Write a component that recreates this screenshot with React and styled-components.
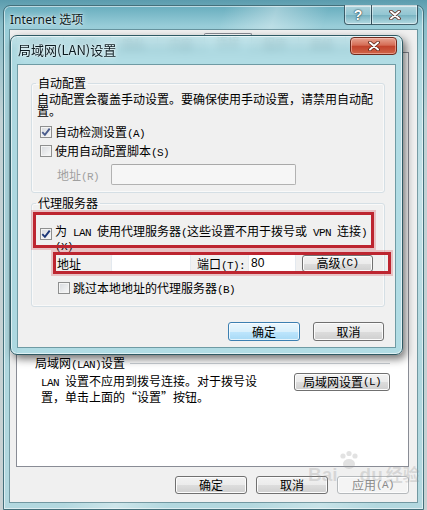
import React from "react";
import styled, { createGlobalStyle } from "styled-components";

const CJK = `"Noto Sans CJK SC", "Noto Sans", sans-serif`;

const Tick = ({ color }) => (
  <svg width="10" height="10" viewBox="0 0 10 10">
    <path d="M1.3 5.2 L3.9 7.8 L8.7 1.6" fill="none" stroke={color} strokeWidth="1.9" />
  </svg>
);

const Check = ({ checked, color = "#34508e" }) => (
  <CheckBox>{checked && <Tick color={color} />}</CheckBox>
);

const CloseGlyph = () => (
  <svg width="12" height="10" viewBox="0 0 12 10">
    <path d="M2 1.5 L10 8.5 M10 1.5 L2 8.5" stroke="#5a2418" strokeWidth="3.6" strokeLinecap="round" />
    <path d="M2 1.5 L10 8.5 M10 1.5 L2 8.5" stroke="#fff" strokeWidth="2" strokeLinecap="round" />
  </svg>
);

const TABS = ["常规", "安全", "隐私", "内容", "连接", "程序", "高级"];

const App = () => {
  return (
    <Desktop>
      <GlobalStyle />
      <OuterWindow>
        <OuterTitleBar>
          <WindowTitle>Internet 选项</WindowTitle>
          <CaptionGroup>
            <CaptionButton $w={28} $first>?</CaptionButton>
            <CaptionButton $w={47} $last>
              <CloseGlyph />
            </CaptionButton>
          </CaptionGroup>
        </OuterTitleBar>
        <OuterClient>
          <TabStrip>
            {TABS.map((t) => (
              <Tab key={t} $active={t === "连接"}>{t}</Tab>
            ))}
          </TabStrip>
          <TabPage>
            <SectionHeader>
              <span>
                局域网<Lat>(LAN)</Lat>设置
              </span>
              <Rule />
            </SectionHeader>
            <SectionBody>
              <SectionText>
                <Lat>LAN </Lat>设置不应用到拨号连接。对于拨号设
                <br />
                置，单击上面的“设置”按钮。
              </SectionText>
              <Button $w={96} $h={18}>
                局域网设置<Lat>(L)</Lat>
              </Button>
            </SectionBody>
          </TabPage>
          <ButtonRow>
            <Button $w={72} $h={18}>确定</Button>
            <Button $w={72} $h={18}>取消</Button>
            <Button $w={72} $h={18} $disabled>
              应用<Lat>(A)</Lat>
            </Button>
          </ButtonRow>
        </OuterClient>
      </OuterWindow>

      <Dialog>
        <DialogTitleBar>
          <DialogTitle>局域网(LAN)设置</DialogTitle>
          <RedClose>
            <CloseGlyph />
          </RedClose>
        </DialogTitleBar>
        <DialogClient>
          <Group>
            <Legend>自动配置</Legend>
            <GroupBody>
              <Description>
                自动配置会覆盖手动设置。要确保使用手动设置，请禁用自动配
                <br />
                置。
              </Description>
              <CheckRow $mt={7} $ml={3}>
                <Check checked color="#4a5c8c" />
                <span>
                  自动检测设置<Lat>(A)</Lat>
                </span>
              </CheckRow>
              <CheckRow $mt={3} $ml={3}>
                <Check />
                <span>
                  使用自动配置脚本<Lat>(S)</Lat>
                </span>
              </CheckRow>
              <ScriptRow>
                <FieldLabel $disabled>
                  地址<Lat>(R)</Lat>
                </FieldLabel>
                <TextBox $w={185} $h={21} disabled />
              </ScriptRow>
            </GroupBody>
          </Group>

          <Group $mt={3}>
            <Legend>代理服务器</Legend>
            <GroupBody $pl={0} $pb={10}>
              <ProxyRow>
                <Check checked color="#1d3778" />
                <ProxyText>
                  为<Lat> LAN </Lat>使用代理服务器<Lat>(</Lat>这些设置不用于拨号或<Lat> VPN </Lat>连接<Lat>)</Lat>
                  <br />
                  <Lat>(X)</Lat>
                </ProxyText>
              </ProxyRow>
              <ServerRow>
                <FieldLabel>地址</FieldLabel>
                <TextBox $w={80} $h={18} readOnly value="" />
                <PortLabel>
                  端口<Lat>(T):</Lat>
                </PortLabel>
                <TextBox $w={48} $h={18} readOnly value="80" />
                <Button $w={71} $h={17} $ml={6}>
                  高级<Lat>(C)</Lat>
                </Button>
              </ServerRow>
              <CheckRow $mt={9} $ml={26}>
                <Check />
                <span>
                  跳过本地地址的代理服务器<Lat>(B)</Lat>
                </span>
              </CheckRow>
            </GroupBody>
          </Group>

          <DialogButtons>
            <Button $w={72} $h={19} $primary>确定</Button>
            <Button $w={71} $h={19}>取消</Button>
          </DialogButtons>
        </DialogClient>
      </Dialog>

      <Watermark>
        <span>Bai</span>
        <Paw viewBox="0 0 24 22" width="26" height="22">
          <circle cx="6" cy="6" r="2.6" />
          <circle cx="12" cy="3.5" r="2.6" />
          <circle cx="18" cy="6" r="2.6" />
          <ellipse cx="12" cy="14" rx="6" ry="5" />
        </Paw>
        <span>du</span>
        <WatermarkCn>经验</WatermarkCn>
      </Watermark>
    </Desktop>
  );
};

const GlobalStyle = createGlobalStyle`
  html, body {
    margin: 0;
    padding: 0;
  }
  body {
    width: 427px;
    height: 510px;
    overflow: hidden;
    background: linear-gradient(180deg, #5b9cae 0, #89bdc9 24px, #c3d2d5 120px, #c8d1d3 100%);
    font-family: ${CJK};
    font-size: 12px;
    color: #000;
  }
`;

const Lat = styled.span`
  font-family: "Liberation Mono", "DejaVu Sans Mono", monospace;
  font-size: 11px;
  letter-spacing: -0.6px;
  line-height: 1;
`;

const Desktop = styled.div`
  position: relative;
  width: 427px;
  height: 510px;
  box-sizing: border-box;
  padding: 5px 3px 0;
  overflow: hidden;
`;

const OuterWindow = styled.div`
  width: 421px;
  height: 505px;
  box-sizing: border-box;
  display: flex;
  flex-direction: column;
  padding: 0 6px 7px;
  border: 1px solid #44707b;
  border-radius: 7px 7px 0 0;
  box-shadow: inset 0 0 0 1px rgba(255, 255, 255, 0.55);
  background:
    linear-gradient(108deg, rgba(255, 255, 255, 0) 0 38%, rgba(255, 255, 255, 0.35) 47%, rgba(255, 255, 255, 0) 56%, rgba(255, 255, 255, 0) 70%, rgba(255, 255, 255, 0.28) 82%, rgba(255, 255, 255, 0) 92%),
    linear-gradient(180deg, #68adbe 0, #98cdd8 20px, #a9d5de 60px, #b3d8df 100%);
`;

const OuterTitleBar = styled.div`
  height: 24px;
  display: flex;
  align-items: flex-start;
  flex: none;
`;

const WindowTitle = styled.div`
  margin-top: 6px;
  line-height: 16px;
  font-family: "Noto Sans", ${CJK};
  font-size: 12px;
  color: #0b1a20;
  text-shadow: 0 0 6px rgba(255, 255, 255, 0.9), 0 0 2px rgba(255, 255, 255, 0.9);
`;

const CaptionGroup = styled.div`
  display: flex;
  margin: -1px -1px 0 auto;
`;

const CaptionButton = styled.div`
  width: ${(p) => p.$w}px;
  height: 20px;
  box-sizing: border-box;
  display: flex;
  align-items: center;
  justify-content: center;
  border: 1px solid rgba(35, 65, 78, 0.8);
  border-top: none;
  margin-left: ${(p) => (p.$first ? 0 : -1)}px;
  border-radius: ${(p) => (p.$first ? "0 0 0 4px" : p.$last ? "0 0 4px 0" : "0")};
  background: linear-gradient(180deg, rgba(255, 255, 255, 0.5), rgba(255, 255, 255, 0.18) 50%, rgba(30, 80, 95, 0.1) 51%, rgba(255, 255, 255, 0.3));
  box-shadow: inset 0 0 0 1px rgba(255, 255, 255, 0.45);
  font-family: "Liberation Sans", sans-serif;
  font-weight: bold;
  font-size: 14px;
  color: #fff;
  text-shadow: 0 0 2px #1d3a44, 0 0 1px #1d3a44;
`;

const OuterClient = styled.div`
  flex: 1;
  display: flex;
  flex-direction: column;
  background: #f0f0f0;
  box-shadow: 0 0 0 1px rgba(70, 110, 120, 0.6);
`;

const TabStrip = styled.div`
  height: 22px;
  box-sizing: border-box;
  padding: 5px 0 0 6px;
  display: flex;
  align-items: flex-end;
`;

const Tab = styled.div`
  height: ${(p) => (p.$active ? 19 : 17)}px;
  box-sizing: border-box;
  padding: 0 11px;
  margin-right: -1px;
  line-height: 16px;
  border: 1px solid #898c95;
  border-bottom: none;
  border-radius: 2px 2px 0 0;
  color: #333;
  background: ${(p) => (p.$active ? "#fff" : "linear-gradient(#f2f2f2, #e3e3e3)")};
`;

const TabPage = styled.div`
  height: 415px;
  box-sizing: border-box;
  margin: 0 8px 0 6px;
  padding: 302px 18px 0;
  border: 1px solid #898c95;
  background: #fff;
`;

const SectionHeader = styled.div`
  height: 16px;
  display: flex;
  align-items: center;
  line-height: 16px;
`;

const Rule = styled.div`
  flex: 1;
  height: 1px;
  margin-left: 5px;
  background: #c9cfd4;
`;

const SectionBody = styled.div`
  display: flex;
  justify-content: space-between;
  align-items: flex-start;
  margin-top: 2px;
`;

const SectionText = styled.div`
  padding-left: 6px;
  line-height: 16px;
`;

const ButtonRow = styled.div`
  display: flex;
  justify-content: flex-end;
  gap: 9px;
  margin: 9px 8px 0 0;
`;

const Button = styled.button`
  width: ${(p) => p.$w}px;
  height: ${(p) => p.$h}px;
  margin-left: ${(p) => p.$ml || 0}px;
  flex: none;
  box-sizing: border-box;
  padding: 0;
  display: flex;
  align-items: center;
  justify-content: center;
  font-family: ${CJK};
  font-size: 12px;
  line-height: 14px;
  border-radius: 3px;
  color: ${(p) => (p.$disabled ? "#8a8a8a" : "#000")};
  border: 1px solid ${(p) => (p.$primary ? "#3c7fb1" : p.$disabled ? "#b5b9bc" : "#707070")};
  background: ${(p) =>
    p.$primary
      ? "linear-gradient(180deg, #eaf6fd 0%, #d9f0fc 50%, #bee6fd 51%, #a7d9f5 100%)"
      : p.$disabled
      ? "#f4f4f4"
      : "linear-gradient(180deg, #f2f2f2 0%, #ebebeb 50%, #dddddd 51%, #cfcfcf 100%)"};
  box-shadow: inset 0 0 0 1px ${(p) => (p.$primary ? "rgba(255,255,255,0.7)" : "#fcfcfc")};
`;

const Dialog = styled.div`
  position: absolute;
  z-index: 10;
  left: 10px;
  top: 35px;
  width: 393px;
  height: 320px;
  box-sizing: border-box;
  display: flex;
  flex-direction: column;
  padding: 0 6px 6px;
  border: 1px solid #2f5a64;
  border-radius: 7px;
  background:
    linear-gradient(180deg, rgba(255, 255, 255, 0.25) 0, rgba(255, 255, 255, 0) 14px),
    rgba(160, 212, 222, 0.82);
  backdrop-filter: blur(4px);
  box-shadow: inset 0 0 0 1px rgba(255, 255, 255, 0.6), 3px 4px 8px rgba(0, 0, 0, 0.55);
`;

const DialogTitleBar = styled.div`
  height: 28px;
  flex: none;
  display: flex;
  align-items: flex-start;
`;

const DialogTitle = styled.div`
  margin: 6px 0 0 1px;
  line-height: 16px;
  font-size: 13px;
  color: #0b1a20;
  text-shadow: 0 0 6px rgba(255, 255, 255, 0.9), 0 0 2px rgba(255, 255, 255, 0.9);
`;

const RedClose = styled.div`
  width: 47px;
  height: 18px;
  box-sizing: border-box;
  margin: 1px -1px 0 auto;
  display: flex;
  align-items: center;
  justify-content: center;
  border: 1px solid #6e2a1d;
  border-radius: 4px;
  background: linear-gradient(180deg, #e8a593 0%, #d56c55 45%, #c2432c 52%, #d06448 100%);
  box-shadow: inset 0 0 0 1px rgba(255, 210, 200, 0.5);
`;

const DialogClient = styled.div`
  flex: 1;
  display: flex;
  flex-direction: column;
  padding: 11px 10px 0 13px;
  background: #f0f0f0;
  border: 1px solid #6f9ba4;
`;

const Group = styled.fieldset`
  margin: ${(p) => p.$mt || 0}px 0 0;
  padding: 0;
  min-width: 0;
  border: 1px solid #d5dfe5;
  border-radius: 3px;
  box-shadow: inset 0 0 0 1px rgba(255, 255, 255, 0.6);
`;

const Legend = styled.legend`
  margin-left: 4px;
  padding: 0 2px;
  line-height: 14px;
  font-size: 12px;
`;

const GroupBody = styled.div`
  display: flex;
  flex-direction: column;
  align-items: flex-start;
  padding: 3px 0 ${(p) => p.$pb ?? 7}px ${(p) => p.$pl ?? 5}px;
`;

const Description = styled.div`
  line-height: 12px;
`;

const CheckRow = styled.div`
  height: 16px;
  display: flex;
  align-items: center;
  gap: 3px;
  margin: ${(p) => p.$mt}px 0 0 ${(p) => p.$ml}px;
  line-height: 16px;
`;

const CheckBox = styled.span`
  width: 12px;
  height: 12px;
  flex: none;
  box-sizing: border-box;
  display: inline-flex;
  align-items: center;
  justify-content: center;
  border: 1px solid #8e8f8f;
  background: linear-gradient(135deg, #d6d9dd, #f9f9f9);
  box-shadow: inset 0 0 0 1px #f4f4f4;
`;

const ScriptRow = styled.div`
  display: flex;
  align-items: center;
  margin-top: 5px;
  padding-left: 20px;
`;

const FieldLabel = styled.span`
  width: 54px;
  flex: none;
  color: ${(p) => (p.$disabled ? "#a0a0a0" : "#000")};
`;

const TextBox = styled.input`
  width: ${(p) => p.$w}px;
  height: ${(p) => p.$h}px;
  flex: none;
  box-sizing: border-box;
  margin: 0;
  padding: 0 2px;
  font-family: "Liberation Sans", sans-serif;
  font-size: 12px;
  color: #000;
  outline: none;
  border: 1px solid ${(p) => (p.disabled ? "#b2b2b2" : "#e3e9ef")};
  border-top-color: ${(p) => (p.disabled ? "#a9a9a9" : "#dfe3e8")};
  border-radius: 2px;
  background: ${(p) => (p.disabled ? "#f6f6f6" : "#fff")};
`;

const ProxyRow = styled.div`
  width: 335px;
  height: 30px;
  box-sizing: border-box;
  margin: 2px 0 0 4px;
  padding: 10px 0 0 4px;
  display: flex;
  align-items: flex-start;
  gap: 3px;
  outline: 3px solid #bd2530;
  box-shadow: 0 0 0 5px rgba(214, 110, 115, 0.35);
  & > span:first-child {
    margin-top: 3px;
  }
`;

const ProxyText = styled.div`
  line-height: 11px;
  white-space: nowrap;
`;

const ServerRow = styled.div`
  width: 332px;
  height: 16px;
  box-sizing: border-box;
  margin: 10px 0 0 24px;
  padding-left: 1px;
  display: flex;
  align-items: center;
  outline: 3px solid #bd2530;
  box-shadow: 0 0 0 5px rgba(214, 110, 115, 0.35);
`;

const PortLabel = styled.span`
  margin: 0 3px 0 6px;
  white-space: nowrap;
`;

const DialogButtons = styled.div`
  display: flex;
  justify-content: flex-end;
  gap: 13px;
  margin-top: 15px;
  padding-right: 1px;
`;

const Watermark = styled.div`
  position: absolute;
  z-index: 11;
  left: 308px;
  top: 450px;
  display: flex;
  align-items: flex-end;
  font-family: "Liberation Sans", sans-serif;
  font-weight: bold;
  font-size: 19px;
  color: rgba(150, 150, 150, 0.28);
  pointer-events: none;
`;

const Paw = styled.svg`
  fill: rgba(150, 150, 150, 0.28);
  margin: 0 -2px 14px;
`;

const WatermarkCn = styled.span`
  font-family: ${CJK};
  font-size: 17px;
  margin-left: 3px;
`;

export default App;
